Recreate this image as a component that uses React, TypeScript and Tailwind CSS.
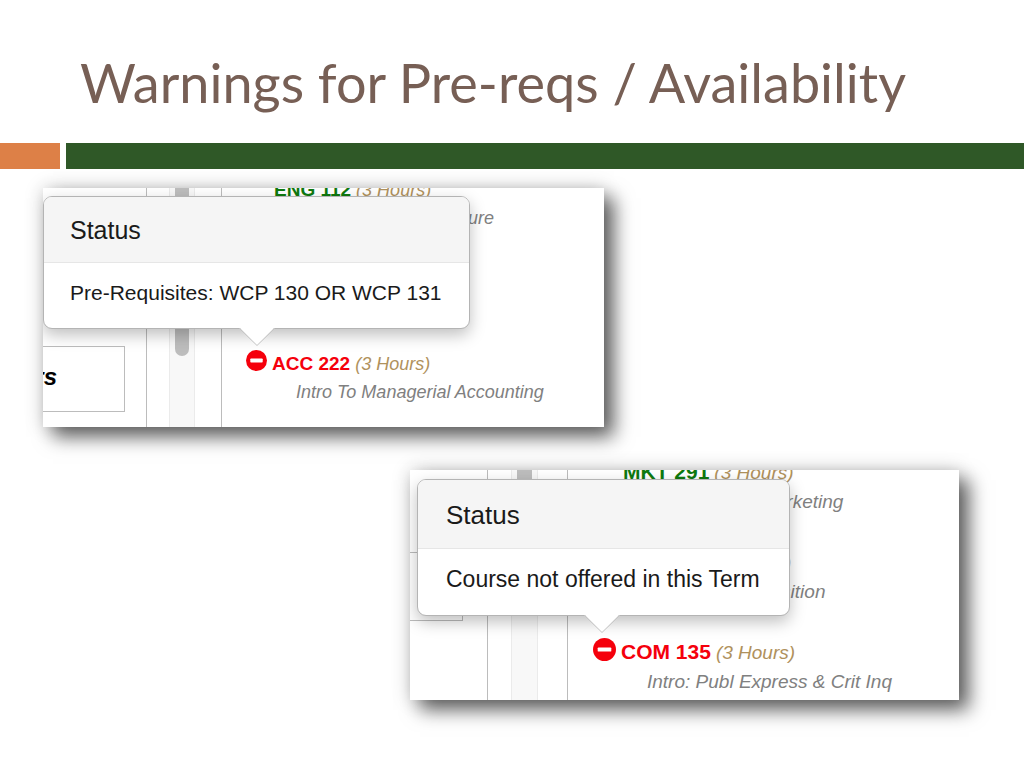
import React from 'react';

type Course = {
  code: string;
  title: string;
  blocked?: boolean;
};

const accountingCourses: Course[] = [
  { code: 'ENG 112', title: 'Composition & Literature' },
  { code: 'ACC 222', title: 'Intro To Managerial Accounting', blocked: true },
];

const communicationCourses: Course[] = [
  { code: 'MKT 291', title: 'Principles Of Marketing' },
  { code: 'ENG 111', title: 'General Composition' },
  { code: 'COM 135', title: 'Intro: Publ Express & Crit Inq', blocked: true },
];

const shotShadow = 'shadow-[10px_10px_18px_rgba(0,0,0,0.6),0_0_18px_rgba(0,0,0,0.18)]';

const BlockedIcon = ({ className }: { className: string }) => (
  <svg viewBox="0 0 22 22" className={className} role="img" aria-label="Not available">
    <circle cx="11" cy="11" r="11" fill="#f5000c" />
    <rect x="4.5" y="9" width="13" height="4" rx="0.8" fill="#fff" />
  </svg>
);

type CourseListProps = {
  courses: Course[];
  className: string;
  lineClass: string;
  codeClass: string;
  hoursClass: string;
  titleClass: string;
  iconClass: string;
};

const CourseList = ({ courses, className, lineClass, codeClass, hoursClass, titleClass, iconClass }: CourseListProps) => (
  <ul className={`-mt-[13px] flex flex-col whitespace-nowrap ${className}`}>
    {courses.map((course) => (
      <li key={course.code}>
        <div className={`flex items-center ${lineClass}`}>
          {course.blocked ? <BlockedIcon className={`mr-[5px] mb-1.5 shrink-0 ${iconClass}`} /> : <span className={`mr-[7px] shrink-0 ${iconClass}`} />}
          <p className="flex items-baseline gap-[5px]">
            <span className={`font-bold ${codeClass} ${course.blocked ? 'text-[#f5000c]' : 'text-[#0f7a0f]'}`}>{course.code}</span>
            <span className={`italic text-[#b0915c] ${hoursClass}`}>(3 Hours)</span>
          </p>
        </div>
        <p className={`italic text-[#808080] ${lineClass} ${titleClass}`}>{course.title}</p>
      </li>
    ))}
  </ul>
);

type StatusPopoverProps = {
  message: string;
  className: string;
  headerClass: string;
  bodyClass: string;
  arrowClass: string;
};

const StatusPopover = ({ message, className, headerClass, bodyClass, arrowClass }: StatusPopoverProps) => (
  <div role="tooltip" className={`absolute flex flex-col rounded-[9px] border border-[#b4b4b4] bg-white shadow-[0_6px_16px_rgba(0,0,0,0.25)] ${className}`}>
    <h2 className={`flex items-center rounded-t-lg border-b border-[#e6e6e6] bg-[#f5f5f5] pt-0.5 text-[#1a1a1a] ${headerClass}`}>Status</h2>
    <p className={`flex flex-1 items-center pb-1.5 whitespace-nowrap text-[#1a1a1a] ${bodyClass}`}>{message}</p>
    <svg viewBox="0 0 36 19" className={`absolute top-full -mt-px ${arrowClass}`} aria-hidden="true">
      <path d="M0 0 L18 18 L36 0 Z" fill="#fff" />
      <path d="M0 1 L18 18.5 L36 1" fill="none" stroke="#c4c4c4" />
    </svg>
  </div>
);

const PrerequisiteShot = () => (
  <figure className={`relative flex h-[239px] w-[561px] overflow-hidden bg-white ${shotShadow}`}>
    <div className="flex w-26 shrink-0 flex-col border-r border-[#bcbcbc]">
      <div className="mt-[42px] h-4 w-px bg-[#333]" />
      <div className="mt-[50px] h-3 w-px bg-[#333]" />
      <div className="mt-[38px] flex h-[66px] w-[82px] items-center justify-end border-y border-r border-[#bcbcbc] pr-[67px] pb-1 text-2xl font-bold italic text-black">
        Hours
      </div>
    </div>
    <div className="ml-[22px] w-[26px] shrink-0 border-x border-[#ebebeb] bg-[#f8f8f8]">
      <div className="mx-auto h-[168px] w-3.5 rounded-b-full bg-[#bdbdbd]" />
    </div>
    <div className="ml-[26px] flex-1 border-l border-[#bcbcbc] pl-6">
      <CourseList
        courses={accountingCourses}
        className="gap-[116px]"
        lineClass="h-[29px] leading-[29px]"
        codeClass="text-[19px]"
        hoursClass="text-[18px]"
        titleClass="pl-[50px] text-[18px]"
        iconClass="size-[21px]"
      />
    </div>
    <StatusPopover
      message="Pre-Requisites: WCP 130 OR WCP 131"
      className="top-2 left-0 h-[133px] w-[427px]"
      headerClass="h-[66px] px-[26px] text-[25px]"
      bodyClass="px-[26px] text-[21px]"
      arrowClass="left-[195px] h-[19px] w-[36px]"
    />
  </figure>
);

const AvailabilityShot = () => (
  <figure className={`relative flex h-[230px] w-[549px] overflow-hidden bg-white ${shotShadow}`}>
    <div className="flex w-[78px] shrink-0 flex-col border-r border-[#bcbcbc]">
      <div className="mt-[82px] h-[69px] w-[53px] border-y border-r border-[#bcbcbc]" />
    </div>
    <div className="ml-[23px] w-[27px] shrink-0 border-x border-[#ebebeb] bg-[#f8f8f8]">
      <div className="mx-auto h-[100px] w-[15px] rounded-b-full bg-[#bdbdbd]" />
    </div>
    <div className="ml-[29px] flex-1 border-l border-[#bcbcbc] pl-[25px]">
      <CourseList
        courses={communicationCourses}
        className="gap-[30px]"
        lineClass="h-[30px] leading-[30px]"
        codeClass="text-[21px]"
        hoursClass="text-[19px]"
        titleClass="pl-[54px] text-[19px]"
        iconClass="size-[23px]"
      />
    </div>
    <StatusPopover
      message="Course not offered in this Term"
      className="top-[9px] left-[7px] h-[137px] w-[373px]"
      headerClass="h-[69px] px-7 text-[26px]"
      bodyClass="px-7 text-[23px]"
      arrowClass="left-[166px] h-[19px] w-[36px]"
    />
  </figure>
);

export default function App() {
  return (
    <main className="min-h-screen overflow-hidden bg-white font-['Liberation_Sans',Arial,sans-serif]">
      <header>
        <h1 className="pt-[51px] pb-7 pl-20 font-['Lato',sans-serif] text-[54px] leading-[64px] text-[#775f55]">
          Warnings for Pre-reqs / Availability
        </h1>
        <div className="flex h-[26px] gap-1.5">
          <div className="w-15 bg-[#dd8047]" />
          <div className="flex-1 bg-[#2f5827]" />
        </div>
      </header>
      <section className="flex flex-col gap-[43px] pt-[19px] pr-[65px] pb-17 pl-[43px]">
        <PrerequisiteShot />
        <div className="self-end">
          <AvailabilityShot />
        </div>
      </section>
    </main>
  );
}
